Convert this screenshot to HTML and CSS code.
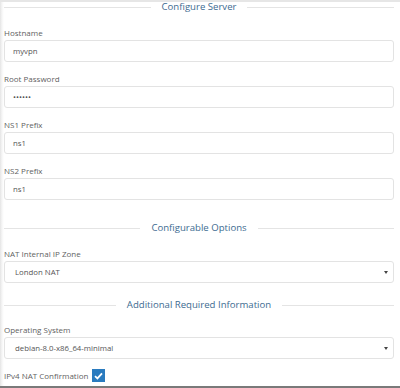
FILE: index.html
```html
<!DOCTYPE html>
<html lang="en">
<head>
    <meta charset="UTF-8">
    <title>Configure Server</title>
    <link rel="stylesheet" href="styles.css">
</head>
<body>
    <div class="panel">
        <div class="section-title first"><span>Configure Server</span></div>

        <div class="form-group">
            <label>Hostname</label>
            <div class="field">myvpn</div>
        </div>
        <div class="form-group">
            <label>Root Password</label>
            <div class="field password">&bull;&bull;&bull;&bull;&bull;&bull;</div>
        </div>
        <div class="form-group">
            <label>NS1 Prefix</label>
            <div class="field">ns1</div>
        </div>
        <div class="form-group">
            <label>NS2 Prefix</label>
            <div class="field">ns1</div>
        </div>

        <div class="section-title"><span>Configurable Options</span></div>

        <div class="form-group">
            <label>NAT Internal IP Zone</label>
            <div class="field select">London NAT</div>
        </div>

        <div class="section-title close"><span>Additional Required Information</span></div>

        <div class="form-group">
            <label>Operating System</label>
            <div class="field select">debian-8.0-x86_64-minimal</div>
        </div>

        <div class="check-row">
            <label>IPv4 NAT Confirmation</label>
            <span class="checkbox">
                <svg width="9" height="8" viewBox="0 0 9 8"><path d="M1 4.2 L3.4 6.4 L8 1.4" fill="none" stroke="#fff" stroke-width="1.8"/></svg>
            </span>
        </div>
    </div>
</body>
</html>
```

FILE: styles.css
```css
body {
    margin: 0;
    font-family: "Open Sans", Arial, sans-serif;
    background: linear-gradient(to right, #e4e4e4 0, #f6f6f6 2px, #fff 4px);
}
.panel {
    display: flex;
    flex-direction: column;
    height: 384px;
    padding: 0 6px 0 4px;
    border-top: 2px solid #e6e6e6;
    border-bottom: 2px solid #7a7a7a;
    overflow: hidden;
}
.section-title {
    display: flex;
    align-items: center;
    gap: 11px;
    height: 12px;
    margin: 12px 0 13px;
    font-size: 9.6px;
    line-height: 12px;
    color: #3d6b91;
    white-space: nowrap;
}
.section-title::before,
.section-title::after {
    content: "";
    flex: 1;
    height: 1px;
    background: #e4e4e4;
}
.section-title.first {
    margin: -1px 0 13px;
}
.section-title.close {
    margin-top: 6px;
    margin-bottom: 12px;
}
.form-group {
    margin-bottom: 10px;
}
label {
    display: block;
    height: 13px;
    margin-bottom: 1px;
    font-size: 8px;
    line-height: 13px;
    color: #5f5f5f;
}
.field {
    position: relative;
    height: 20px;
    padding: 0 8px;
    border: 1px solid #e3e3e3;
    border-radius: 3px;
    font-size: 7.8px;
    line-height: 20px;
    color: #555;
}
.field.password {
    font-size: 8px;
}
.field.select {
    padding-left: 10px;
}
.field.select::after {
    content: "";
    position: absolute;
    right: 5px;
    top: 9px;
    border-left: 2px solid transparent;
    border-right: 2px solid transparent;
    border-top: 3px solid #444;
}
.check-row {
    display: flex;
    align-items: center;
    gap: 4px;
}
.check-row label {
    margin: 0;
}
.checkbox {
    display: flex;
    align-items: center;
    justify-content: center;
    width: 13px;
    height: 13px;
    background: #2a7bbf;
}
```
